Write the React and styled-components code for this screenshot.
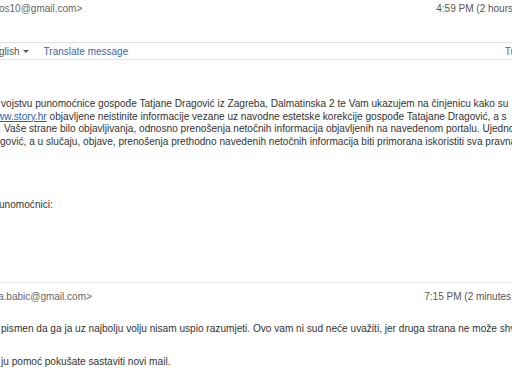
import React from 'react';
import styled, { createGlobalStyle } from 'styled-components';

const GlobalStyle = createGlobalStyle`
  html, body {
    margin: 0;
    padding: 0;
    background: #ffffff;
  }
  body {
    font-family: "Liberation Sans", Arial, sans-serif;
    font-size: 10px;
    color: #333333;
  }
`;

const Page = styled.div`
  width: 512px;
  height: 384px;
  overflow: hidden;
  background: #ffffff;
`;

const HeaderRow = styled.div`
  display: flex;
  justify-content: space-between;
  align-items: center;
  height: 12.5px;
  line-height: 12.5px;
  padding-top: ${(p) => p.$top}px;
  white-space: nowrap;
  color: #666666;
`;

const Sender = styled.span`
  margin-left: ${(p) => p.$shift || 0}px;
`;

const Stamp = styled.span`
  color: #555555;
  margin-right: ${(p) => p.$cut || 0}px;
`;

const TranslateBar = styled.div`
  display: flex;
  align-items: center;
  height: 16px;
  margin-top: 26.5px;
  border-top: 1px solid #e3e3e3;
  border-bottom: 1px solid #e3e3e3;
  white-space: nowrap;
`;

const Language = styled.span`
  display: inline-flex;
  align-items: center;
  gap: 3px;
  color: #555555;
  margin-left: -1px;
`;

const Caret = styled.span`
  width: 0;
  height: 0;
  border-left: 3px solid transparent;
  border-right: 3px solid transparent;
  border-top: 3px solid #555555;
`;

const TranslateLink = styled.span`
  color: #3d63b8;
  margin-left: 15px;
`;

const BarEnd = styled.span`
  margin-left: auto;
  margin-right: -4px;
  color: #3d63b8;
`;

const Body = styled.div`
  padding-top: ${(p) => p.$top}px;
  font-size: 10.1px;
  line-height: 12.5px;
  color: #333333;
`;

const Line = styled.div`
  white-space: nowrap;
  text-indent: ${(p) => p.$shift || 0}px;
`;

const Paragraph = styled.div`
  margin-top: ${(p) => p.$gap || 0}px;
  white-space: nowrap;
  text-indent: ${(p) => p.$shift || 0}px;
`;

const Link = styled.span`
  color: #2a5db0;
  text-decoration: underline;
`;

const Divider = styled.div`
  margin-top: ${(p) => p.$gap}px;
  border-top: 1px solid #e8e8e8;
`;

function App() {
  return (
    <Page>
      <GlobalStyle />
      <HeaderRow $top={3}>
        <Sender $shift={-1}>os10@gmail.com&gt;</Sender>
        <Stamp $cut={-1}>4:59 PM (2 hours</Stamp>
      </HeaderRow>
      <TranslateBar>
        <Language>
          glish
          <Caret />
        </Language>
        <TranslateLink>Translate message</TranslateLink>
        <BarEnd>Tu</BarEnd>
      </TranslateBar>
      <Body $top={38}>
        <Line $shift={1}>
          vojstvu punomoćnice gospođe Tatjane Dragović iz Zagreba, Dalmatinska 2 te Vam ukazujem na činjenicu kako su
        </Line>
        <Line $shift={-3}>
          <Link>ww.story.hr</Link>
          {' '}objavljene neistinite informacije vezane uz navodne estetske korekcije gospođe Tatajane Dragović, a s
        </Line>
        <Line $shift={4}>
          Vaše strane bilo objavljivanja, odnosno prenošenja netočnih informacija objavljenih na navedenom portalu. Ujedno
        </Line>
        <Line $shift={0}>
          gović, a u slučaju, objave, prenošenja prethodno navedenih netočnih informacija biti primorana iskoristiti sva pravna
        </Line>
        <Paragraph $gap={51} $shift={-1}>unomoćnici:</Paragraph>
      </Body>
      <Divider $gap={70} />
      <HeaderRow $top={8}>
        <Sender $shift={-2}>a.babic@gmail.com&gt;</Sender>
        <Stamp $cut={1}>7:15 PM (2 minutes</Stamp>
      </HeaderRow>
      <Body $top={19.5}>
        <Line $shift={1}>
          pismen da ga ja uz najbolju volju nisam uspio razumjeti. Ovo vam ni sud neće uvažiti, jer druga strana ne može shvatiti
        </Line>
        <Paragraph $gap={20.5} $shift={1}>ju pomoć pokušate sastaviti novi mail.</Paragraph>
      </Body>
    </Page>
  );
}

export default App;
